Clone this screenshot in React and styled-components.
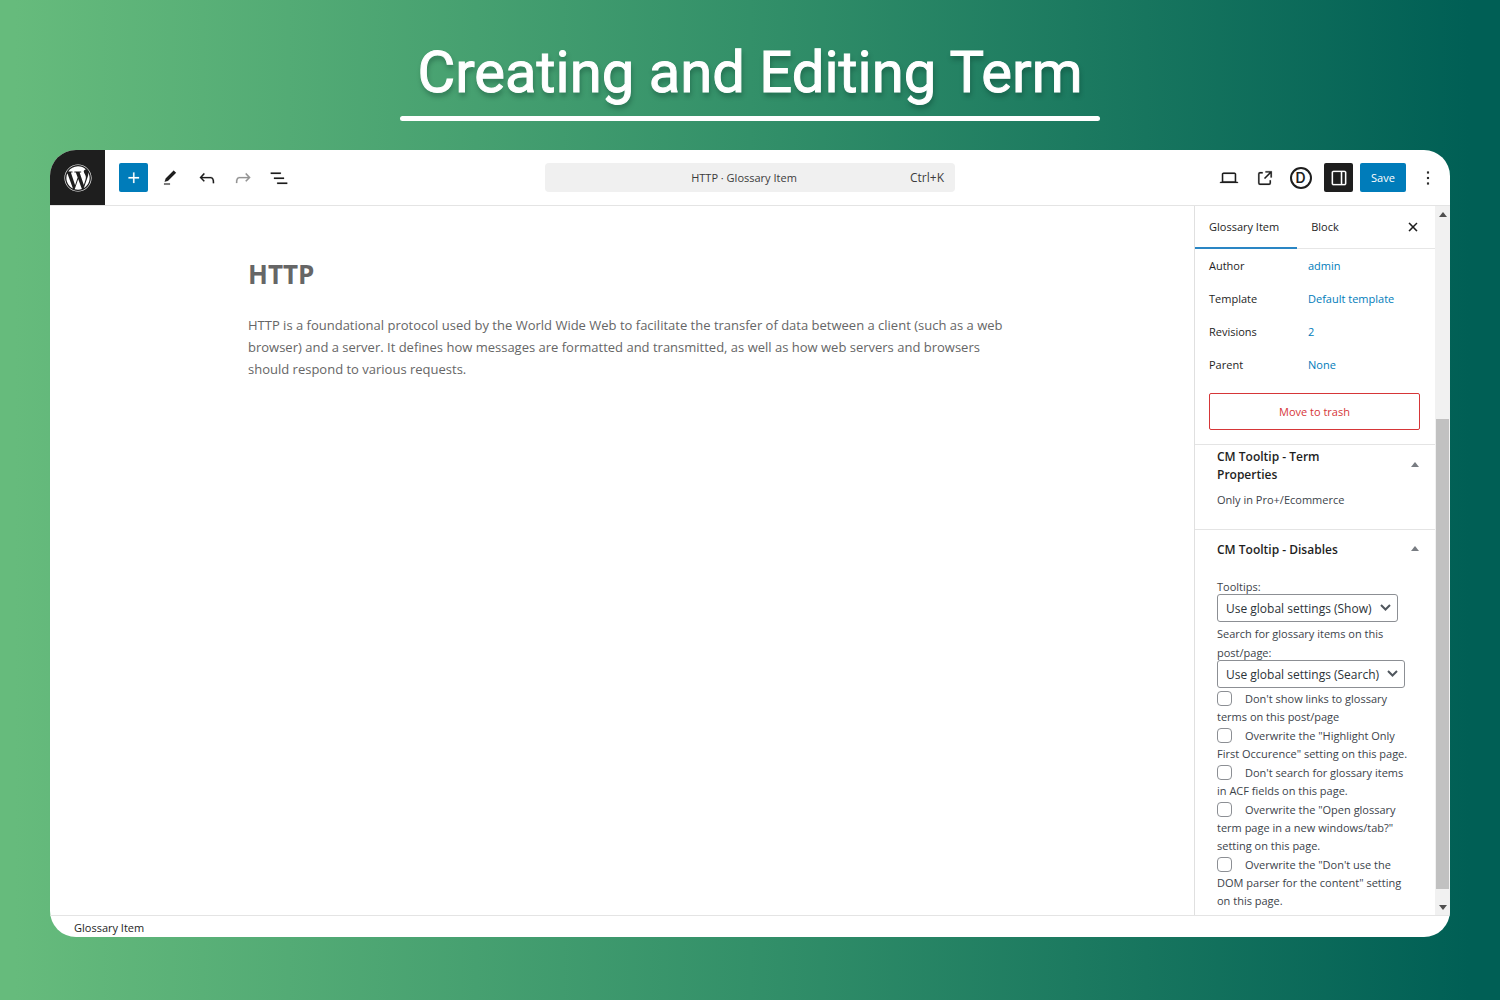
import React, { useState } from 'react';
import styled, { createGlobalStyle } from 'styled-components';
import { FaWordpress } from 'react-icons/fa';

const GlobalStyle = createGlobalStyle`
    * {
        box-sizing: border-box;
    }

    body {
        margin: 0;
        font-family: 'Open Sans', 'Noto Sans', sans-serif;
        font-size: 11px;
        font-weight: 500;
        color: #1e1e1e;
    }

    button, select, input {
        font-family: inherit;
        font-size: inherit;
        font-weight: inherit;
        color: inherit;
        margin: 0;
    }
`;

const Page = styled.div`
    display: flex;
    flex-direction: column;
    min-height: 100vh;
    padding: 0 50px 63px;
    background: linear-gradient(90deg, #66bb7c 1%, #339069 50%, #005f55 98%);
`;

const Banner = styled.header`
    display: flex;
    flex-direction: column;
    align-items: center;
    height: 150px;
    padding-top: 36px;
`;

const Title = styled.h1`
    margin: 0;
    color: #fff;
    font-family: Roboto, sans-serif;
    font-size: 58px;
    font-weight: 400;
    line-height: 72px;
    white-space: nowrap;
    -webkit-text-stroke: 1px #fff;
    text-shadow: 1px 4px 5px rgba(0, 40, 30, 0.35);
`;

const Underline = styled.div`
    width: 700px;
    max-width: 100%;
    height: 5px;
    margin-top: 8px;
    border-radius: 3px;
    background: #fff;
`;

const Window = styled.div`
    flex: 1;
    display: flex;
    flex-direction: column;
    overflow: hidden;
    border-radius: 26px;
    background: #fff;
`;

const TopBar = styled.div`
    display: grid;
    grid-template-columns: 1fr auto 1fr;
    align-items: center;
    height: 56px;
    border-bottom: 1px solid #e4e4e4;
`;

const Tools = styled.div`
    display: flex;
    align-items: center;
    align-self: stretch;
    gap: 7px;
    justify-content: ${props => (props.$end ? 'flex-end' : 'flex-start')};
    padding-right: ${props => (props.$end ? '8px' : '0')};
`;

const ToolGroup = styled.div`
    display: flex;
    gap: 7px;
    padding: ${props => props.$pad};
`;

const Logo = styled.a`
    display: flex;
    align-items: center;
    justify-content: center;
    align-self: stretch;
    width: 55px;
    margin-right: 7px;
    background: #1e1e1e;
    color: #fff;
    font-size: 28px;
`;

const IconButton = styled.button`
    display: flex;
    align-items: center;
    justify-content: center;
    width: 29px;
    height: 29px;
    padding: 0;
    border: none;
    border-radius: 2px;
    background: ${props => props.$bg || 'none'};
    color: ${props => props.$color || '#1e1e1e'};
    cursor: pointer;

    svg {
        fill: currentColor;
    }
`;

const DiviMark = styled.span`
    display: flex;
    align-items: center;
    justify-content: center;
    width: 22px;
    height: 22px;
    border: 2px solid #1e1e1e;
    border-radius: 50%;
    font-family: Inter, sans-serif;
    font-size: 14px;
    font-weight: 600;
    line-height: 18px;
`;

const SaveButton = styled.button`
    height: 29px;
    width: 46px;
    padding: 0;
    border: none;
    border-radius: 2px;
    background: #007cba;
    color: #fff;
    cursor: pointer;
`;

const CommandBar = styled.button`
    display: flex;
    align-items: center;
    width: 410px;
    height: 29px;
    padding: 0 11px 0 33px;
    border: none;
    border-radius: 4px;
    background: #f0f0f0;
    color: #3c3c3c;

    span {
        flex: 1;
    }

    kbd {
        font-family: inherit;
        font-size: 12px;
    }
`;

const Body = styled.div`
    flex: 1;
    display: flex;
`;

const Canvas = styled.main`
    flex: 1;
    padding: 50px 185px 0 198px;
    color: #666;
`;

const PostTitle = styled.h2`
    margin: 0 0 22px;
    font-size: 26px;
    line-height: 36px;
    font-weight: 700;
`;

const Paragraph = styled.p`
    margin: 0;
    font-size: 13px;
    font-weight: 400;
    line-height: 22px;
`;

const Sidebar = styled.aside`
    display: flex;
    width: 256px;
    border-left: 1px solid #e0e0e0;
`;

const Panels = styled.div`
    flex: 1;
    min-width: 0;
`;

const Tabs = styled.div`
    display: flex;
    align-items: center;
    height: 43px;
    padding-right: 8px;
    border-bottom: 1px solid #e6e6e6;
`;

const Tab = styled.button`
    height: 43px;
    padding: 0 18px 0 14px;
    border: none;
    border-bottom: 2px solid ${props => (props.$active ? '#2a86c4' : 'transparent')};
    background: none;
    cursor: pointer;
`;

const Spacer = styled.div`
    flex: 1;
`;

const Summary = styled.section`
    padding: 0 15px 14px 14px;
    border-bottom: 1px solid #e4e4e4;
`;

const SummaryRow = styled.div`
    display: flex;
    align-items: center;
    height: 33px;

    span {
        width: 99px;
    }

    a {
        color: #007cba;
        text-decoration: none;
    }
`;

const TrashButton = styled.button`
    width: 100%;
    height: 37px;
    margin-top: 12px;
    border: 1px solid #d63638;
    border-radius: 2px;
    background: #fff;
    color: #d63638;
    cursor: pointer;
`;

const MetaBox = styled.section`
    padding: ${props => (props.$tall ? '11px 16px 4px 22px' : '3px 16px 20px 22px')};
    border-bottom: ${props => (props.$tall ? 'none' : '1px solid #e4e4e4')};
    color: #3c434a;
`;

const MetaHead = styled.div`
    display: flex;
    align-items: center;
    justify-content: space-between;
    margin-bottom: ${props => props.$gap};
`;

const MetaTitle = styled.h3`
    width: 140px;
    margin: 0;
    color: #1e1e1e;
    font-size: 12px;
    font-weight: 600;
    line-height: 18px;
`;

const Toggle = styled.button`
    display: flex;
    padding: 0 0 3px;
    border: none;
    background: none;
    color: #787c82;

    svg {
        fill: currentColor;
    }
`;

const MetaText = styled.p`
    margin: 0;
    line-height: 18px;
`;

const Field = styled.div`
    margin-bottom: 2px;
`;

const FieldLabel = styled.label`
    display: block;
    line-height: 19px;
`;

const SelectBox = styled.div`
    position: relative;
    width: ${props => props.$width};
    margin-top: -2px;

    select {
        display: block;
        width: 100%;
        height: 28px;
        padding: 0 8px;
        border: 1px solid #8c8f94;
        border-radius: 3px;
        background: #fff;
        appearance: none;
        font-size: 12px;
        color: #2c3338;
    }

    svg {
        position: absolute;
        right: 7px;
        top: 10px;
        pointer-events: none;
    }
`;

const CheckRow = styled.label`
    display: block;
    margin-bottom: 1px;
    padding-right: 8px;
    line-height: 18px;

    input {
        appearance: none;
        width: 15px;
        height: 15px;
        margin-right: 13px;
        border: 1px solid #8c8f94;
        border-radius: 4px;
        background: #fff;
        vertical-align: -3px;
    }

    input:checked {
        background: #007cba;
    }
`;

const Scrollbar = styled.div`
    display: flex;
    flex-direction: column;
    align-items: center;
    width: 15px;
    padding: 6px 0 5px;
    background: #f1f1f1;

    svg {
        fill: #505050;
    }
`;

const Track = styled.div`
    flex: 1;
    display: flex;
    flex-direction: column;
    justify-content: flex-end;
    width: 13px;
    padding-bottom: 16px;
`;

const Thumb = styled.div`
    height: 70%;
    background: #c1c1c1;
`;

const Footer = styled.footer`
    padding: 2px 24px 0;
    height: 22px;
    border-top: 1px solid #e4e4e4;
    line-height: 20px;
`;

const paths = {
    plus: 'M11 12.5V17.5H12.5V12.5H17.5V11H12.5V6H11V11H6V12.5H11Z',
    edit: 'M20.1 5.1L16.9 2 6.2 12.7l-1.3 4.4 4.5-1.3L20.1 5.1zM4 20.8h8v-1.5H4v1.5z',
    undo: 'M18.3 11.7c-.6-.6-1.4-.9-2.3-.9H6.7l2.9-3.3-1.1-1-4.5 5L8.5 16l1-1-2.7-2.7H16c.5 0 .9.2 1.3.5 1 1 1 3.4 1 4.5v.3h1.5v-.2c0-1.5 0-4.3-1.5-5.7z',
    redo: 'M15.6 6.5l-1.1 1 2.9 3.3H8c-.9 0-1.7.3-2.3.9-1.4 1.5-1.4 4.2-1.4 5.6v.2h1.5v-.3c0-1.1 0-3.5 1-4.5.3-.3.7-.5 1.3-.5h9.2L14.5 15l1.1 1.1 4.6-4.6-4.6-5z',
    list: 'M3 6h11v1.5H3V6Zm3.5 5.5h11V13h-11v-1.5ZM21 17H10v1.5h11V17Z',
    desktop: 'M20.5 16h-.7V8c0-1.1-.9-2-2-2H6.2c-1.1 0-2 .9-2 2v8h-.7c-.8 0-1.5.7-1.5 1.5h20c0-.8-.7-1.5-1.5-1.5zM5.7 8c0-.3.2-.5.5-.5h11.6c.3 0 .5.2.5.5v7.6H5.7V8z',
    external: 'M19.5 4.5h-7V6h4.44l-5.97 5.97 1.06 1.06L18 7.06v4.44h1.5v-7Zm-13 1a2 2 0 0 0-2 2v10a2 2 0 0 0 2 2h10a2 2 0 0 0 2-2v-3H17v3a.5.5 0 0 1-.5.5h-10a.5.5 0 0 1-.5-.5v-10a.5.5 0 0 1 .5-.5h3V5.5h-3Z',
    drawer: 'M18 4H6c-1.1 0-2 .9-2 2v12c0 1.1.9 2 2 2h12c1.1 0 2-.9 2-2V6c0-1.1-.9-2-2-2zm-4 14.5H6c-.3 0-.5-.2-.5-.5V6c0-.3.2-.5.5-.5h8v13zm4.5-.5c0 .3-.2.5-.5.5h-2.5v-13H18c.3 0 .5.2.5.5v12z',
    more: 'M13 19h-2v-2h2v2zm0-6h-2v-2h2v2zm0-6h-2V5h2v2z',
    close: 'M12 13.06l3.712 3.713 1.061-1.06L13.061 12l3.712-3.712-1.06-1.06L12 10.938 8.288 7.227l-1.061 1.06L10.939 12l-3.712 3.712 1.06 1.061L12 13.061z',
};

const Icon = ({ name, size = 22 }) => (
    <svg width={size} height={size} viewBox="0 0 24 24" stroke="currentColor" strokeWidth="0.2">
        <path d={paths[name]} />
    </svg>
);

const Arrow = ({ down }) => (
    <svg width="8" height="5" viewBox="0 0 8 5">
        <path d={down ? 'M0 0h8L4 5z' : 'M0 5h8L4 0z'} />
    </svg>
);

const Select = ({ id, label, option, width }) => (
    <Field>
        <FieldLabel htmlFor={id}>{label}</FieldLabel>
        <SelectBox $width={width}>
            <select id={id}>
                <option>{option}</option>
            </select>
            <svg width="11" height="8" viewBox="0 0 11 8" fill="none" stroke="#50575e" strokeWidth="2">
                <path d="M1 1l4.500 4.500L10 1" />
            </svg>
        </SelectBox>
    </Field>
);

const summary = [
    ['Author', 'admin'],
    ['Template', 'Default template'],
    ['Revisions', '2'],
    ['Parent', 'None'],
];

const options = [
    "Don't show links to glossary terms on this post/page",
    'Overwrite the "Highlight Only First Occurence" setting on this page.',
    "Don't search for glossary items in ACF fields on this page.",
    'Overwrite the "Open glossary term page in a new windows/tab?" setting on this page.',
    'Overwrite the "Don\'t use the DOM parser for the content" setting on this page.',
];

const App = () => {
    const [tab, setTab] = useState('Glossary Item');

    return (
        <Page>
            <GlobalStyle />
            <Banner>
                <Title>Creating and Editing Term</Title>
                <Underline />
            </Banner>
            <Window>
                <TopBar>
                    <Tools>
                        <Logo href="#" aria-label="WordPress">
                            <FaWordpress />
                        </Logo>
                        <IconButton $bg="#007cba" $color="#fff" aria-label="Add block"><Icon name="plus" /></IconButton>
                        <IconButton aria-label="Edit"><Icon name="edit" size={18} /></IconButton>
                        <ToolGroup $pad="0 0 0 1px">
                            <IconButton aria-label="Undo"><Icon name="undo" /></IconButton>
                            <IconButton $color="#949494" aria-label="Redo"><Icon name="redo" /></IconButton>
                            <IconButton aria-label="Document overview"><Icon name="list" /></IconButton>
                        </ToolGroup>
                    </Tools>
                    <CommandBar>
                        <span>HTTP · Glossary Item</span>
                        <kbd>Ctrl+K</kbd>
                    </CommandBar>
                    <Tools $end>
                        <ToolGroup $pad="0 2px 0 0">
                            <IconButton aria-label="View"><Icon name="desktop" /></IconButton>
                            <IconButton aria-label="Open in new tab"><Icon name="external" /></IconButton>
                            <IconButton aria-label="Divi"><DiviMark>D</DiviMark></IconButton>
                        </ToolGroup>
                        <IconButton $bg="#1e1e1e" $color="#fff" aria-label="Settings"><Icon name="drawer" /></IconButton>
                        <SaveButton>Save</SaveButton>
                        <IconButton aria-label="Options"><Icon name="more" /></IconButton>
                    </Tools>
                </TopBar>
                <Body>
                    <Canvas>
                        <PostTitle>HTTP</PostTitle>
                        <Paragraph>
                            HTTP is a foundational protocol used by the World Wide Web to facilitate the transfer of
                            data between a client (such as a web browser) and a server. It defines how messages are
                            formatted and transmitted, as well as how web servers and browsers should respond to
                            various requests.
                        </Paragraph>
                    </Canvas>
                    <Sidebar>
                        <Panels>
                            <Tabs>
                                {['Glossary Item', 'Block'].map(name => (
                                    <Tab key={name} $active={tab === name} onClick={() => setTab(name)}>
                                        {name}
                                    </Tab>
                                ))}
                                <Spacer />
                                <IconButton aria-label="Close"><Icon name="close" /></IconButton>
                            </Tabs>
                            <Summary>
                                {summary.map(([name, value]) => (
                                    <SummaryRow key={name}>
                                        <span>{name}</span>
                                        <a href="#">{value}</a>
                                    </SummaryRow>
                                ))}
                                <TrashButton>Move to trash</TrashButton>
                            </Summary>
                            <MetaBox>
                                <MetaHead $gap="7px">
                                    <MetaTitle>CM Tooltip - Term Properties</MetaTitle>
                                    <Toggle aria-label="Toggle Term Properties"><Arrow /></Toggle>
                                </MetaHead>
                                <MetaText>Only in Pro+/Ecommerce</MetaText>
                            </MetaBox>
                            <MetaBox $tall>
                                <MetaHead $gap="18px">
                                    <MetaTitle>CM Tooltip - Disables</MetaTitle>
                                    <Toggle aria-label="Toggle Disables"><Arrow /></Toggle>
                                </MetaHead>
                                <Select id="tooltips" label="Tooltips:" option="Use global settings (Show)" width="181px" />
                                <Select
                                    id="search"
                                    label="Search for glossary items on this post/page:"
                                    option="Use global settings (Search)"
                                    width="188px"
                                />
                                {options.map(text => (
                                    <CheckRow key={text}>
                                        <input type="checkbox" />
                                        {text}
                                    </CheckRow>
                                ))}
                            </MetaBox>
                        </Panels>
                        <Scrollbar>
                            <Arrow />
                            <Track>
                                <Thumb />
                            </Track>
                            <Arrow down />
                        </Scrollbar>
                    </Sidebar>
                </Body>
                <Footer>Glossary Item</Footer>
            </Window>
        </Page>
    );
};

export default App;
